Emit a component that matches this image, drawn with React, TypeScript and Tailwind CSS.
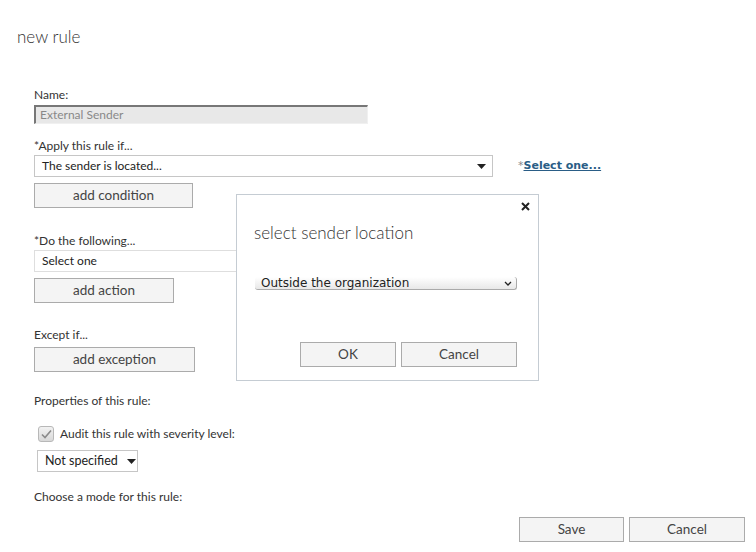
const font = { fontFamily: "Lato, 'Open Sans', sans-serif" };

const Btn = ({ label, w }: { label: string; w: string }) => (
  <div
    className={`${w} h-[25px] flex items-center justify-center border border-[#ababab] bg-[#f4f4f4] text-[13.5px] text-[#444]`}
  >
    {label}
  </div>
);

const Caret = () => (
  <svg width="9" height="5" viewBox="0 0 9 5" className="shrink-0">
    <path d="M0 0 H9 L4.5 5 Z" fill="#222" />
  </svg>
);

export default function App() {
  return (
    <div
      className="relative w-[756px] h-[552px] bg-white text-[#333] overflow-hidden"
      style={font}
    >
      <div className="pl-[17px] pt-[25px] text-[17px] font-light text-[#333] leading-[24px]">
        new rule
      </div>

      <div className="pl-[34px] pt-[38px] flex flex-col text-[12px]">
        <div className="h-[16px] leading-[16px]">Name:</div>
        <div className="mt-[2px] w-[334px] h-[19px] bg-[#e8e8e8] border-t-2 border-l-2 border-[#777] border-r border-b border-r-[#f0f0f0] border-b-[#f0f0f0] pl-[4px] flex items-center text-[#888] text-[12px]">
          External Sender
        </div>

        <div className="mt-[14px] h-[16px] leading-[16px]">*Apply this rule if...</div>
        <div className="mt-[1px] flex items-center">
          <div className="w-[459px] h-[22px] border border-[#c6c6c6] flex items-center justify-between pl-[7px] pr-[6px] text-[#222] text-[12px]">
            The sender is located...
            <Caret />
          </div>
          <span
            className="ml-[25px] text-[11px] text-[#888]"
            style={{ fontFamily: "'DejaVu Sans', Verdana, sans-serif" }}
          >
            *
            <span className="font-bold text-[#2a5d86] underline">Select one...</span>
          </span>
        </div>
        <div className="mt-[6px]">
          <Btn label="add condition" w="w-[159px]" />
        </div>

        <div className="mt-[25px] h-[16px] leading-[16px]">*Do the following...</div>
        <div className="mt-[1px] w-[459px] h-[22px] border border-[#dedede] flex items-center pl-[7px] text-[#222] text-[12px]">
          Select one
        </div>
        <div className="mt-[6px]">
          <Btn label="add action" w="w-[140px]" />
        </div>

        <div className="mt-[24px] h-[16px] leading-[16px]">Except if...</div>
        <div className="mt-[4px]">
          <Btn label="add exception" w="w-[161px]" />
        </div>

        <div className="mt-[21px] h-[16px] leading-[16px]">Properties of this rule:</div>
        <div className="mt-[16px] flex items-center pl-[4px]">
          <div className="w-[16px] h-[16px] rounded-[3px] border border-[#b8b8b8] bg-gradient-to-b from-[#f2f2f2] to-[#d8d8d8] flex items-center justify-center">
            <svg width="11" height="10" viewBox="0 0 11 10">
              <path d="M1 5.5 L4 8.5 L10 1.5" stroke="#8a8a8a" strokeWidth="1.6" fill="none" />
            </svg>
          </div>
          <span className="ml-[6px] text-[12px]">Audit this rule with severity level:</span>
        </div>
        <div className="mt-[7px] ml-[3px] w-[101px] h-[22px] border border-[#c6c6c6] flex items-center pl-[7px] gap-[9px] text-[12.5px] text-[#222] whitespace-nowrap">
          Not specified
          <Caret />
        </div>

        <div className="mt-[17px] h-[16px] leading-[16px]">Choose a mode for this rule:</div>
      </div>

      <div className="absolute left-[519px] top-[517px] flex gap-[5px]">
        <Btn label="Save" w="w-[105px]" />
        <Btn label="Cancel" w="w-[116px]" />
      </div>

      {/* dialog */}
      <div className="absolute left-[236px] top-[194px] w-[303px] h-[187px] bg-white border border-[#c5ccd3] flex flex-col">
        <div className="flex justify-end pr-[8px] pt-[7px] h-[20px]">
          <svg width="9" height="9" viewBox="0 0 9 9">
            <path d="M1 1 L8 8 M8 1 L1 8" stroke="#222" strokeWidth="2" />
          </svg>
        </div>
        <div className="pl-[17px] mt-[6px] text-[17px] font-light leading-[24px] text-[#333]">
          select sender location
        </div>
        <div
          className="ml-[18px] mt-[32px] w-[262px] h-[13px] rounded-[3px] border-b border-r border-[#aaa] bg-gradient-to-b from-white to-[#e8e8e8] flex items-center justify-between pl-[6px] pr-[4px] text-[12px] text-[#222] leading-none"
          style={{ fontFamily: "'DejaVu Sans', sans-serif" }}
        >
          Outside the organization
          <svg width="8" height="5" viewBox="0 0 8 5">
            <path d="M1 1 L4 4 L7 1" stroke="#222" strokeWidth="1.3" fill="none" />
          </svg>
        </div>
        <div className="mt-auto mb-[13px] flex justify-end gap-[5px] pr-[21px]">
          <Btn label="OK" w="w-[96px]" />
          <Btn label="Cancel" w="w-[116px]" />
        </div>
      </div>
    </div>
  );
}
